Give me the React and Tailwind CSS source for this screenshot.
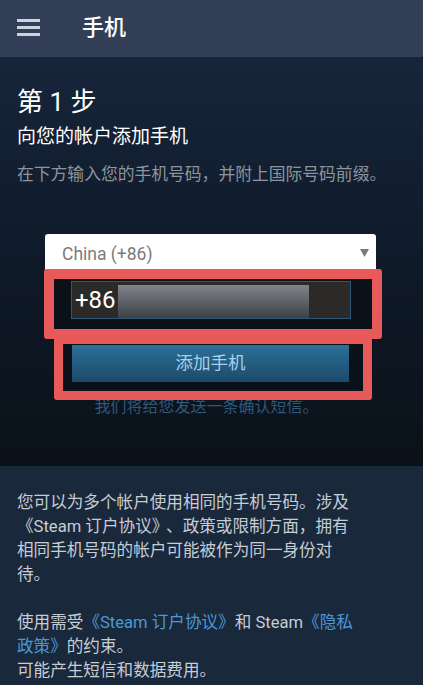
export default function App() {
  return (
    <div
      className="relative h-[685px] w-[423px] overflow-hidden bg-[#1a283b]"
      style={{ fontFamily: 'Roboto, "Noto Sans CJK SC", sans-serif' }}
    >
      <header className="flex h-[60px] items-center border-b-[3px] border-[#1a2332] bg-[#323f56] pb-[2px]">
        <div className="ml-[17px] flex w-[23px] flex-col gap-[4.5px]">
          <span className="h-[2.5px] bg-[#cdd3dc]"></span>
          <span className="h-[2.5px] bg-[#cdd3dc]"></span>
          <span className="h-[2.5px] bg-[#cdd3dc]"></span>
        </div>
        <h1 className="ml-[42px] text-[22px] font-medium text-white">手机</h1>
      </header>

      <section className="flex h-[406px] flex-col bg-gradient-to-b from-[#17253b] via-[#0f1a29] to-[#0a1118]">
        <div className="px-[17px] pt-[27px]">
          <h2 className="text-[26px] leading-[31px] text-white">第 1 步</h2>
          <p className="mt-[6px] text-[19px] leading-[26px] text-white">向您的帐户添加手机</p>
          <p className="mt-[12px] whitespace-nowrap text-[16.8px] leading-[24px] text-[#8c959e]">
            在下方输入您的手机号码，并附上国际号码前缀。
          </p>
        </div>

        <div className="ml-[45px] mt-[48px] flex h-[40px] w-[331px] items-start justify-between rounded-[3px] bg-white px-[17px] pt-[7px]">
          <span className="text-[17.5px] text-[#7b7b7b]">China (+86)</span>
          <svg width="9" height="8" viewBox="0 0 9 8" className="-mr-[10px] mt-[8px]">
            <polygon points="0,0 9,0 4.5,8" fill="#7a7a7a" />
          </svg>
        </div>

        <div className="ml-[54px] mt-[4px] w-[319px] bg-[#0a1118] pb-[7px] pt-[3px]">
          <div className="ml-[17px] flex h-[38px] w-[280px] border border-[#2f5677] bg-[#2b2a29]">
            <span className="flex w-[46px] items-center pl-[3px] text-[24px] text-white">+86</span>
            <span className="mt-[3px] h-[33px] w-[191px] bg-gradient-to-b from-[#80858b] to-[#3e4247]"></span>
          </div>
          <button
            type="button"
            className="ml-[18px] mt-[26px] flex h-[37px] w-[277px] items-center justify-center bg-gradient-to-b from-[#2c7099] to-[#1c4a6a] text-[17.5px] text-[#a9d0ea]"
          >
            添加手机
          </button>
        </div>

        <p className="mt-[7px] pr-[10px] text-center text-[16px] leading-[22px] text-[#2f5879]">
          我们将给您发送一条确认短信。
        </p>
      </section>

      <section className="px-[17px] pt-[25px] text-[16.6px] leading-[24px] text-[#c6cdd4]">
        <p className="whitespace-nowrap">
          您可以为多个帐户使用相同的手机号码。涉及
          <br />
          《Steam 订户协议》<span className="ml-[6px]">、</span>政策或限制方面，拥有
          <br />
          相同手机号码的帐户可能被作为同一身份对
          <br />
          待。
        </p>
        <p className="mt-[24px] whitespace-nowrap">
          使用需受<span className="text-[#4a98d6]">《Steam 订户协议》</span>和 Steam<span className="text-[#4a98d6]">《隐私</span>
          <br />
          <span className="text-[#4a98d6]">政策》</span>的约束。
          <br />
          可能产生短信和数据费用。
        </p>
      </section>

      <div className="pointer-events-none absolute left-[44px] top-[269px] h-[70px] w-[338px] rounded-[3px] border-[10px] border-[#e85a5a]"></div>
      <div className="pointer-events-none absolute left-[54px] top-[335px] h-[65px] w-[318px] rounded-[3px] border-[9px] border-[#e85a5a]"></div>
    </div>
  );
}
